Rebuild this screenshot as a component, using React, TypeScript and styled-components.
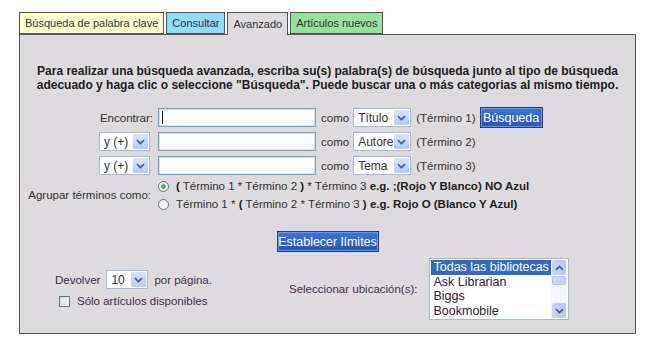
import React from "react";
import styled, { createGlobalStyle } from "styled-components";

const GlobalStyle = createGlobalStyle`
  body {
    margin: 0;
    background: #ffffff;
    font-family: "Liberation Sans", Arial, sans-serif;
    font-size: 11.5px;
    color: #333;
  }
`;

const tabs = [
  { label: "Búsqueda de palabra clave", bg: "#ffffcc" },
  { label: "Consultar", bg: "#8fdcf7" },
  { label: "Avanzado", bg: "#dddbdd", active: true },
  { label: "Artículos nuevos", bg: "#95e29a" },
];

const locations = ["Todas las bibliotecas", "Ask Librarian", "Biggs", "Bookmobile"];

function Chevron({ dir = "down" }: { dir?: "down" | "up" }) {
  return (
    <svg width="9" height="6" viewBox="0 0 9 6">
      <path
        d={dir === "down" ? "M1 1.2 L4.5 4.6 L8 1.2" : "M1 4.8 L4.5 1.4 L8 4.8"}
        fill="none"
        stroke="#4d6185"
        strokeWidth="1.8"
      />
    </svg>
  );
}

function Select({ value, width }: { value: string; width: number }) {
  return (
    <SelectBox style={{ width }}>
      <SelectValue>{value}</SelectValue>
      <ArrowButton>
        <Chevron />
      </ArrowButton>
    </SelectBox>
  );
}

export default function App() {
  return (
    <>
      <GlobalStyle />
      <Page>
        <TabBar>
          {tabs.map((t) => (
            <Tab key={t.label} $bg={t.bg} $active={!!t.active}>
              {t.label}
            </Tab>
          ))}
        </TabBar>
        <Panel>
          <Intro>
            Para realizar una búsqueda avanzada, escriba su(s) palabra(s) de búsqueda junto al tipo de búsqueda
            <br />
            adecuado y haga clic o seleccione "Búsqueda". Puede buscar una o más categorias al mismo tiempo.
          </Intro>

          <Form>
            <Row>
              <LabelCell>Encontrar:</LabelCell>
              <TextInput>
                <Caret />
              </TextInput>
              <Word>como</Word>
              <Select value="Título" width={58} />
              <Term>(Término 1)</Term>
              <BlueButton $w={63}>Búsqueda</BlueButton>
            </Row>
            <Row>
              <LabelCell>
                <Select value="y (+)" width={51} />
              </LabelCell>
              <TextInput />
              <Word>como</Word>
              <Select value="Autore" width={58} />
              <Term>(Término 2)</Term>
            </Row>
            <Row>
              <LabelCell>
                <Select value="y (+)" width={51} />
              </LabelCell>
              <TextInput />
              <Word>como</Word>
              <Select value="Tema" width={58} />
              <Term>(Término 3)</Term>
            </Row>
          </Form>

          <GroupRow>
            <GroupLabel>Agrupar términos como:</GroupLabel>
            <RadioList>
              <RadioLine>
                <Radio $checked />
                <span>
                  <b>(</b> Término 1 * Término 2 <b>)</b> * Término 3 <b>e.g. ;(Rojo Y Blanco) NO Azul</b>
                </span>
              </RadioLine>
              <RadioLine>
                <Radio />
                <span>
                  Término 1 * <b>(</b> Término 2 * Término 3 <b>) e.g. Rojo O (Blanco Y Azul)</b>
                </span>
              </RadioLine>
            </RadioList>
          </GroupRow>

          <Center>
            <BlueButton $w={102}>Establecer límites</BlueButton>
          </Center>

          <Bottom>
            <LeftCol>
              <InlineRow>
                <span>Devolver</span>
                <Select value="10" width={42} />
                <span>por página.</span>
              </InlineRow>
              <CheckRow>
                <CheckBox />
                <span>Sólo artículos disponibles</span>
              </CheckRow>
            </LeftCol>
            <RightCol>
              <span>Seleccionar ubicación(s):</span>
              <ListBox>
                <ListItems>
                  {locations.map((l, i) => (
                    <ListItem key={l} $selected={i === 0}>
                      {l}
                    </ListItem>
                  ))}
                </ListItems>
                <ScrollBar>
                  <ScrollBtn>
                    <Chevron dir="up" />
                  </ScrollBtn>
                  <Thumb />
                  <ScrollTrack />
                  <ScrollBtn>
                    <Chevron />
                  </ScrollBtn>
                </ScrollBar>
              </ListBox>
            </RightCol>
          </Bottom>
        </Panel>
      </Page>
    </>
  );
}

const Page = styled.div`
  padding: 12px 0 0 19px;
  width: 617px;
`;

const TabBar = styled.div`
  display: flex;
  gap: 2px;
  height: 22px;
  position: relative;
  z-index: 1;
`;

const Tab = styled.div<{ $bg: string; $active: boolean }>`
  box-sizing: border-box;
  height: ${(p) => (p.$active ? "23px" : "22px")};
  background: ${(p) => p.$bg};
  border: 1px solid #555;
  border-bottom: ${(p) => (p.$active ? "none" : "1px solid #555")};
  padding: 0 5px;
  display: flex;
  align-items: center;
  font-size: 11px;
  color: #333;
`;

const Panel = styled.div`
  box-sizing: border-box;
  width: 617px;
  height: 300px;
  background: #dddbdd;
  border: 1px solid #555;
  display: flex;
  flex-direction: column;
`;

const Intro = styled.p`
  margin: 29px 0 0;
  text-align: center;
  font-weight: bold;
  font-size: 12px;
  line-height: 14px;
  color: #222;
`;

const Form = styled.div`
  margin-top: 16px;
  display: flex;
  flex-direction: column;
  gap: 5px;
`;

const Row = styled.div`
  display: flex;
  align-items: center;
  height: 19px;
`;

const LabelCell = styled.div`
  width: 133px;
  padding-right: 5px;
  display: flex;
  justify-content: flex-end;
  align-items: center;
  color: #333;
  & > div {
    margin-right: 3px;
  }
`;

const TextInput = styled.div`
  box-sizing: border-box;
  width: 158px;
  height: 19px;
  background: #fcfcfc;
  border: 1px solid #7f9db9;
  box-shadow: inset 0 0 0 1px #d8e2ee;
  display: flex;
  align-items: center;
  padding-left: 3px;
`;

const Caret = styled.span`
  width: 1px;
  height: 13px;
  background: #222;
`;

const Word = styled.span`
  margin: 0 4px 0 5px;
`;

const Term = styled.span`
  margin: 0 4px 0 5px;
`;

const SelectBox = styled.div`
  box-sizing: border-box;
  height: 19px;
  background: #fff;
  border: 1px solid #a5b9d2;
  display: flex;
  align-items: center;
`;

const SelectValue = styled.span`
  flex: 1;
  padding-left: 4px;
  font-size: 12px;
  color: #333;
  white-space: nowrap;
  overflow: hidden;
`;

const ArrowButton = styled.span`
  width: 15px;
  height: 15px;
  margin-right: 1px;
  background: linear-gradient(#d6e3fd, #b6cbf6);
  border-radius: 1px;
  display: flex;
  align-items: center;
  justify-content: center;
`;

const BlueButton = styled.div<{ $w: number }>`
  box-sizing: border-box;
  width: ${(p) => p.$w}px;
  height: 21px;
  background: linear-gradient(#3d76d6, #2456b8);
  border: 1px solid #1b3f8f;
  box-shadow: inset 0 0 0 1px #6d98e0;
  color: #fff;
  font-size: 12.5px;
  display: flex;
  align-items: center;
  justify-content: center;
  white-space: nowrap;
`;

const GroupRow = styled.div`
  margin-top: 2px;
  display: flex;
  align-items: center;
`;

const GroupLabel = styled.div`
  width: 131px;
  padding-right: 7px;
  text-align: right;
`;

const RadioList = styled.div`
  display: flex;
  flex-direction: column;
`;

const RadioLine = styled.div`
  height: 18px;
  display: flex;
  align-items: center;
  gap: 7px;
  white-space: nowrap;
  color: #333;
  b {
    color: #222;
  }
`;

const Radio = styled.span<{ $checked?: boolean }>`
  box-sizing: border-box;
  width: 11px;
  height: 11px;
  border-radius: 50%;
  border: 1px solid #5b7a9e;
  background: ${(p) =>
    p.$checked
      ? "radial-gradient(circle, #3cb83c 0 2px, #f4f4f4 2.5px)"
      : "#f4f4f4"};
`;

const Center = styled.div`
  margin-top: 18px;
  display: flex;
  justify-content: center;
`;

const Bottom = styled.div`
  margin-top: 6px;
  display: flex;
`;

const LeftCol = styled.div`
  margin: 12px 0 0 35px;
  width: 234px;
  display: flex;
  flex-direction: column;
  gap: 6px;
`;

const InlineRow = styled.div`
  display: flex;
  align-items: center;
  gap: 6px;
  height: 19px;
  color: #40304a;
`;

const CheckRow = styled.div`
  display: flex;
  align-items: center;
  gap: 7px;
  margin-left: 4px;
  color: #40304a;
`;

const CheckBox = styled.span`
  box-sizing: border-box;
  width: 11px;
  height: 11px;
  border: 1px solid #5b7a9e;
  background: linear-gradient(135deg, #dcdcd6, #fafaf8);
`;

const RightCol = styled.div`
  display: flex;
  align-items: center;
  gap: 12px;
  color: #40304a;
`;

const ListBox = styled.div`
  box-sizing: border-box;
  width: 140px;
  height: 62px;
  background: #fff;
  border: 1px solid #a5b9d2;
  padding: 1px;
  display: flex;
`;

const ListItems = styled.div`
  flex: 1;
  display: flex;
  flex-direction: column;
`;

const ListItem = styled.div<{ $selected: boolean }>`
  height: 14.5px;
  line-height: 14.5px;
  font-size: 12.5px;
  padding-left: 2px;
  white-space: nowrap;
  overflow: hidden;
  background: ${(p) => (p.$selected ? "#316ac5" : "transparent")};
  color: ${(p) => (p.$selected ? "#fff" : "#30202a")};
`;

const ScrollBar = styled.div`
  width: 16px;
  display: flex;
  flex-direction: column;
  background: #f5f6f9;
`;

const ScrollBtn = styled.div`
  height: 15px;
  margin: 0 1px;
  border-radius: 2px;
  background: linear-gradient(90deg, #c6d6fb, #b4c9f5);
  display: flex;
  align-items: center;
  justify-content: center;
`;

const Thumb = styled.div`
  height: 9px;
  margin: 1px 1px 0;
  border-radius: 2px;
  background: linear-gradient(90deg, #cfdcfb, #bfd0f7);
  border: 1px solid #b0c4ef;
  box-sizing: border-box;
`;

const ScrollTrack = styled.div`
  flex: 1;
`;
